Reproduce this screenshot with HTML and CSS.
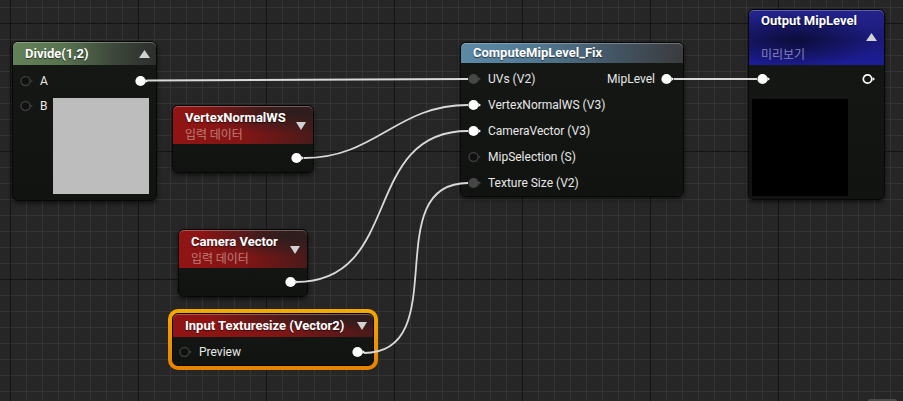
FILE: index.html
```html
<!DOCTYPE html>
<html>
<head>
<meta charset="utf-8">
<link rel="stylesheet" href="styles.css">
</head>
<body>
<div class="graph">

  <!-- Divide -->
  <div class="node n-divide">
    <div class="hdr hdr-green">
      <span class="title">Divide(1,2)</span>
      <svg class="tri" width="11" height="8" viewBox="0 0 11 8"><path d="M5.5 0 L11 8 L0 8Z"/></svg>
    </div>
    <div class="body divide-body">
      <div class="row">
        <span class="pinlabel"><svg class="pin pin-off" width="14" height="12" viewBox="0 0 14 12"><circle cx="5.5" cy="6" r="4.5"/><path d="M10.6 4.2 L12.8 6 L10.6 7.8Z"/></svg><span>A</span></span>
        <svg class="pin pin-on" width="14" height="12" viewBox="0 0 14 12"><circle cx="5.5" cy="6" r="5.1"/><path d="M10.4 3.9 L13 6 L10.4 8.1Z"/></svg>
      </div>
      <div class="row row-b">
        <span class="pinlabel"><svg class="pin pin-off" width="14" height="12" viewBox="0 0 14 12"><circle cx="5.5" cy="6" r="4.5"/><path d="M10.6 4.2 L12.8 6 L10.6 7.8Z"/></svg><span>B</span></span>
        <div class="swatch swatch-gray"></div>
      </div>
    </div>
  </div>

  <!-- VertexNormalWS -->
  <div class="node n-vnormal">
    <div class="hdr hdr-red hdr-two">
      <div class="hdr-text">
        <span class="title">VertexNormalWS</span>
        <span class="sub sub-red">입력 데이터</span>
      </div>
      <svg class="tri" width="10" height="8" viewBox="0 0 10 8"><path d="M0 0 L10 0 L5 8Z"/></svg>
    </div>
    <div class="body out-body">
      <svg class="pin pin-on" width="14" height="12" viewBox="0 0 14 12"><circle cx="5.5" cy="6" r="5.1"/><path d="M10.4 3.9 L13 6 L10.4 8.1Z"/></svg>
    </div>
  </div>

  <!-- Camera Vector -->
  <div class="node n-camera">
    <div class="hdr hdr-red hdr-two">
      <div class="hdr-text">
        <span class="title">Camera Vector</span>
        <span class="sub sub-red">입력 데이터</span>
      </div>
      <svg class="tri" width="10" height="8" viewBox="0 0 10 8"><path d="M0 0 L10 0 L5 8Z"/></svg>
    </div>
    <div class="body out-body">
      <svg class="pin pin-on" width="14" height="12" viewBox="0 0 14 12"><circle cx="5.5" cy="6" r="5.1"/><path d="M10.4 3.9 L13 6 L10.4 8.1Z"/></svg>
    </div>
  </div>

  <!-- Input Texturesize (selected) -->
  <div class="selected n-texsize">
    <div class="node node-inner">
      <div class="hdr hdr-red hdr-one">
        <span class="title">Input Texturesize (Vector2)</span>
        <svg class="tri" width="10" height="8" viewBox="0 0 10 8"><path d="M0 0 L10 0 L5 8Z"/></svg>
      </div>
      <div class="body tex-body">
        <div class="row">
          <span class="pinlabel"><svg class="pin pin-off" width="14" height="12" viewBox="0 0 14 12"><circle cx="5.5" cy="6" r="4.5"/><path d="M10.6 4.2 L12.8 6 L10.6 7.8Z"/></svg><span>Preview</span></span>
          <svg class="pin pin-on" width="14" height="12" viewBox="0 0 14 12"><circle cx="5.5" cy="6" r="5.1"/><path d="M10.4 3.9 L13 6 L10.4 8.1Z"/></svg>
        </div>
      </div>
    </div>
  </div>

  <!-- ComputeMipLevel_Fix -->
  <div class="node n-compute">
    <div class="hdr hdr-blue">
      <span class="title">ComputeMipLevel_Fix</span>
    </div>
    <div class="body compute-body">
      <div class="row crow">
        <span class="pinlabel"><svg class="pin pin-dim" width="14" height="12" viewBox="0 0 14 12"><circle cx="5.5" cy="6" r="5.1"/><path d="M10.4 3.9 L13 6 L10.4 8.1Z"/></svg><span>UVs (V2)</span></span>
        <span class="pinlabel"><span>MipLevel</span><svg class="pin pin-on" width="14" height="12" viewBox="0 0 14 12"><circle cx="5.5" cy="6" r="5.1"/><path d="M10.4 3.9 L13 6 L10.4 8.1Z"/></svg></span>
      </div>
      <div class="row crow">
        <span class="pinlabel"><svg class="pin pin-on" width="14" height="12" viewBox="0 0 14 12"><circle cx="5.5" cy="6" r="5.1"/><path d="M10.4 3.9 L13 6 L10.4 8.1Z"/></svg><span>VertexNormalWS (V3)</span></span>
      </div>
      <div class="row crow">
        <span class="pinlabel"><svg class="pin pin-on" width="14" height="12" viewBox="0 0 14 12"><circle cx="5.5" cy="6" r="5.1"/><path d="M10.4 3.9 L13 6 L10.4 8.1Z"/></svg><span>CameraVector (V3)</span></span>
      </div>
      <div class="row crow">
        <span class="pinlabel"><svg class="pin pin-off" width="14" height="12" viewBox="0 0 14 12"><circle cx="5.5" cy="6" r="4.5"/><path d="M10.6 4.2 L12.8 6 L10.6 7.8Z"/></svg><span>MipSelection (S)</span></span>
      </div>
      <div class="row crow">
        <span class="pinlabel"><svg class="pin pin-dim" width="14" height="12" viewBox="0 0 14 12"><circle cx="5.5" cy="6" r="5.1"/><path d="M10.4 3.9 L13 6 L10.4 8.1Z"/></svg><span>Texture Size (V2)</span></span>
      </div>
    </div>
  </div>

  <!-- Output MipLevel -->
  <div class="node n-output">
    <div class="hdr hdr-purple hdr-out">
      <span class="title">Output MipLevel</span>
      <div class="tri-row"><svg class="tri" width="11" height="8" viewBox="0 0 11 8"><path d="M5.5 0 L11 8 L0 8Z"/></svg></div>
      <span class="sub sub-blue">미리보기</span>
    </div>
    <div class="body output-body">
      <div class="row">
        <svg class="pin pin-on" width="14" height="12" viewBox="0 0 14 12"><circle cx="5.5" cy="6" r="5.1"/><path d="M10.4 3.9 L13 6 L10.4 8.1Z"/></svg>
        <svg class="pin pin-ring" width="14" height="12" viewBox="0 0 14 12"><circle cx="5.5" cy="6" r="4.2"/><path d="M10.6 4 L13 6 L10.6 8Z"/></svg>
      </div>
      <div class="swatch swatch-black"></div>
    </div>
  </div>

  <!-- wires -->
  <svg class="wires" width="903" height="401" viewBox="0 0 903 401">
    <path d="M147 80.5 C254 80.5 361 79 468 79"/>
    <path d="M304 158 C376 158 396 105 468 105"/>
    <path d="M296 282 C404 282 360 131 468 131"/>
    <path d="M364 353 C455 353 377 183 468 183"/>
    <path d="M674 79 C702 79 729 79 757 79"/>
  </svg>

  <div class="scroll-nub"></div>
</div>
</body>
</html>
```
FILE: styles.css
```css
html, body {
  margin: 0;
  padding: 0;
  background: #262626;
}

.graph {
  position: relative;
  width: 903px;
  height: 401px;
  overflow: hidden;
  background-color: #262626;
  background-image:
    linear-gradient(to right, #141414 1px, transparent 1px),
    linear-gradient(to bottom, #141414 1px, transparent 1px),
    linear-gradient(to right, #343434 1px, transparent 1px),
    linear-gradient(to bottom, #343434 1px, transparent 1px);
  background-size: 128px 128px, 128px 128px, 16px 16px, 16px 16px;
  background-position: 10px 0, 0 23px, 10px 0, 0 7px;
  font-family: Roboto, "Noto Sans CJK KR", sans-serif;
}

/* ---------- nodes ---------- */
.node {
  position: absolute;
  box-sizing: border-box;
  display: flex;
  flex-direction: column;
  background: linear-gradient(#161816, #111311);
  border: 1px solid #070707;
  border-radius: 6px;
  box-shadow: 0 2px 4px rgba(0, 0, 0, 0.6);
  color: #e6e6e6;
}

.hdr {
  display: flex;
  align-items: center;
  justify-content: space-between;
  border-radius: 5px 5px 0 0;
  box-shadow: inset 0 1px 0 rgba(255, 255, 255, 0.28);
  box-sizing: border-box;
}

.title {
  font-size: 13px;
  font-weight: 700;
  color: #ffffff;
  line-height: 16px;
  white-space: nowrap;
  text-shadow: 0 1px 1px rgba(0, 0, 0, 0.6);
}

.sub {
  font-family: "Noto Sans CJK KR", sans-serif;
  font-size: 12px;
  line-height: 16px;
  white-space: nowrap;
}
.sub-red { color: #bd7f78; }
.sub-blue { color: #8282bc; }

.tri { fill: #d2d2d2; display: block; }

.hdr-green {
  height: 23px;
  padding: 0 6px 0 12px;
  background: linear-gradient(to right, #648259 0%, #58734f 35%, #3d473a 70%, #2c2e2c 100%);
}

.hdr-blue {
  height: 21px;
  padding: 0 12px;
  background: linear-gradient(to right, #5d8aa6 0%, #527891 35%, #425463 70%, #3a3b3d 100%);
}

.hdr-red {
  background:
    radial-gradient(ellipse 90% 80% at 85% 15%, rgba(40, 30, 30, 0.95) 0%, rgba(40, 30, 30, 0.4) 45%, rgba(40, 30, 30, 0) 75%),
    linear-gradient(to right, #921414 0%, #821515 50%, #4a1a1a 100%);
}

.hdr-two {
  height: 38px;
  padding: 0 7px 0 12px;
}
.hdr-text {
  display: flex;
  flex-direction: column;
  padding-top: 1px;
}
.hdr-two .tri { margin-top: 2px; }

.hdr-one {
  height: 23px;
  padding: 0 6px 0 12px;
}

.hdr-purple {
  background:
    radial-gradient(ellipse 60% 50% at 35% 55%, rgba(10, 10, 50, 0.85) 0%, rgba(10, 10, 50, 0) 100%),
    linear-gradient(to bottom, #23238c 0%, #1a1a7a 55%, #1d1d9a 100%);
}

.hdr-out {
  height: 55px;
  flex-direction: column;
  align-items: stretch;
  justify-content: flex-start;
  padding: 3px 7px 0 12px;
}
.tri-row {
  display: flex;
  justify-content: flex-end;
  height: 8px;
  margin-top: 4px;
}
.hdr-out .sub { margin-top: 5px; }

.body {
  display: flex;
  flex-direction: column;
  font-size: 12px;
  color: #e8e8e8;
}

.row {
  display: flex;
  align-items: center;
  justify-content: space-between;
}

.pinlabel {
  display: flex;
  align-items: center;
  gap: 6px;
  white-space: nowrap;
}

.pin { display: block; flex: none; }
.pin-on circle, .pin-on path { fill: #ffffff; }
.pin-dim circle, .pin-dim path { fill: #464646; }
.pin-off circle { fill: #0f100f; stroke: #3a3a3a; stroke-width: 1.5; }
.pin-off path { fill: #3a3a3a; }
.pin-ring circle { fill: #151515; stroke: #ffffff; stroke-width: 1.7; }
.pin-ring path { fill: #ffffff; }

.swatch { flex: none; }
.swatch-gray { width: 96px; height: 96px; background: #bdbdbd; }
.swatch-black { width: 96px; height: 97px; background: #000000; }

/* Divide */
.n-divide { left: 12px; top: 41px; width: 145px; height: 160px; }
.divide-body { padding: 7px 7px 6px 7px; }
.divide-body .row { height: 18px; }
.divide-body .row-b {
  height: auto;
  align-items: flex-start;
  margin-top: 8px;
}
.row-b .pinlabel { height: 16px; }

/* red input nodes */
.n-vnormal { left: 172px; top: 105px; width: 142px; height: 68px; }
.n-camera { left: 178px; top: 229px; width: 130px; height: 68px; }
.out-body {
  flex: 1;
  flex-direction: row;
  align-items: center;
  justify-content: flex-end;
  padding: 0 8px 0 0;
}

/* selected Texturesize */
.selected {
  position: absolute;
  left: 168px;
  top: 309px;
  width: 210px;
  height: 61px;
  box-sizing: border-box;
  padding: 4px;
  border-radius: 10px;
  background: linear-gradient(#f4a900, #e68200);
  display: flex;
}
.node-inner {
  position: static;
  flex: 1;
  box-shadow: none;
}
.tex-body { flex: 1; justify-content: center; padding: 1px 7px 0 6px; }

/* Compute */
.n-compute { left: 460px; top: 42px; width: 224px; height: 155px; }
.compute-body { padding: 3px 8px 0 7px; }
.crow { height: 26px; }

/* Output */
.n-output { left: 748px; top: 9px; width: 137px; height: 191px; }
.output-body { padding: 5px 8px 0 3px; }
.output-body .row { height: 18px; padding-left: 5px; }
.output-body .swatch { margin-top: 11px; }

/* wires */
.wires {
  position: absolute;
  left: 0;
  top: 0;
  pointer-events: none;
}
.wires path {
  fill: none;
  stroke: #d9d9d9;
  stroke-width: 1.8;
}

.scroll-nub {
  position: absolute;
  right: 6px;
  bottom: -3px;
  width: 29px;
  height: 5px;
  border-radius: 2px;
  background: #4a4a4a;
}
```
